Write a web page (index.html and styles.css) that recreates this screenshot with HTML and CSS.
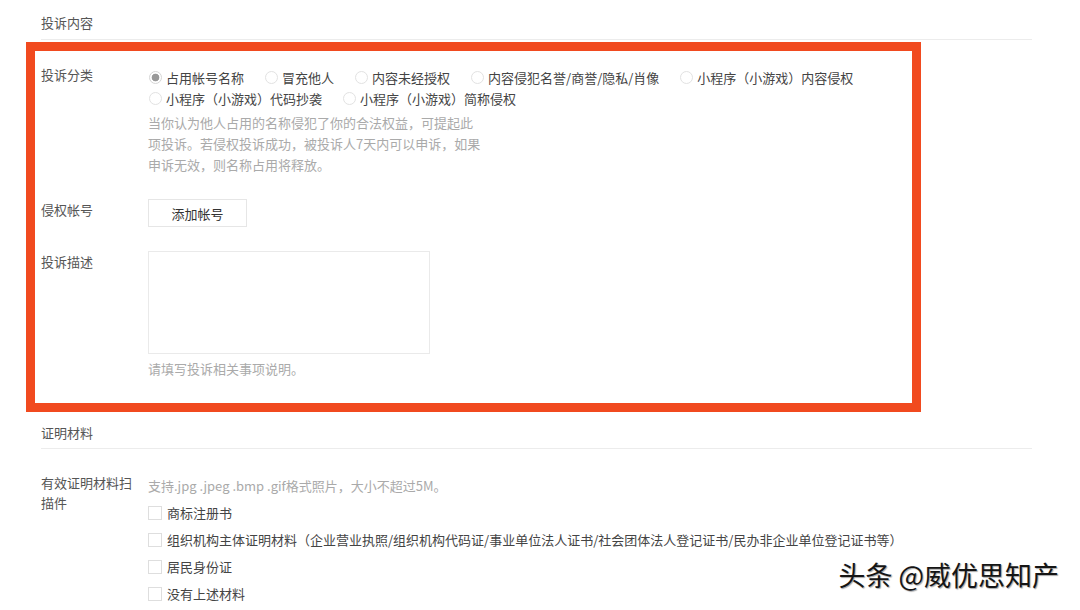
FILE: index.html
```html
<!DOCTYPE html>
<html lang="zh-CN">
<head>
  <meta charset="UTF-8">
  <meta name="viewport" content="width=device-width, initial-scale=1.0">
  <title>投诉内容</title>
  <link rel="stylesheet" href="styles.css">
</head>
<body>
  <div class="page">
    <div class="section-title">投诉内容</div>
    <div class="highlight">
      <div class="form-row">
        <div class="form-label">投诉分类</div>
        <div class="form-field field-offset">
          <div class="radio-group">
            <label class="radio"><input type="radio" name="type" checked><span>占用帐号名称</span></label>
            <label class="radio"><input type="radio" name="type"><span>冒充他人</span></label>
            <label class="radio"><input type="radio" name="type"><span>内容未经授权</span></label>
            <label class="radio"><input type="radio" name="type"><span>内容侵犯名誉/商誉/隐私/肖像</span></label>
            <label class="radio"><input type="radio" name="type"><span>小程序（小游戏）内容侵权</span></label>
            <label class="radio"><input type="radio" name="type"><span>小程序（小游戏）代码抄袭</span></label>
            <label class="radio"><input type="radio" name="type"><span>小程序（小游戏）简称侵权</span></label>
          </div>
          <p class="tips tips-type">当你认为他人占用的名称侵犯了你的合法权益，可提起此<br>项投诉。若侵权投诉成功，被投诉人7天内可以申诉，如果<br>申诉无效，则名称占用将释放。</p>
        </div>
      </div>
      <div class="form-row">
        <div class="form-label">侵权帐号</div>
        <div class="form-field">
          <button class="btn">添加帐号</button>
        </div>
      </div>
      <div class="form-row">
        <div class="form-label">投诉描述</div>
        <div class="form-field">
          <textarea class="textarea"></textarea>
          <p class="tips tips-desc">请填写投诉相关事项说明。</p>
        </div>
      </div>
    </div>

    <div class="section-title section-proof">证明材料</div>
    <div class="form-row row-proof">
      <div class="form-label label-proof">有效证明材料扫描件</div>
      <div class="form-field field-offset">
        <p class="tips tips-proof">支持.jpg .jpeg .bmp .gif格式照片，大小不超过5M。</p>
        <label class="checkbox"><input type="checkbox"><span>商标注册书</span></label>
        <label class="checkbox"><input type="checkbox"><span>组织机构主体证明材料（企业营业执照/组织机构代码证/事业单位法人证书/社会团体法人登记证书/民办非企业单位登记证书等）</span></label>
        <label class="checkbox"><input type="checkbox"><span>居民身份证</span></label>
        <label class="checkbox"><input type="checkbox"><span>没有上述材料</span></label>
      </div>
    </div>
  </div>
  <div class="watermark">头条 @威优思知产</div>
</body>
</html>
```

FILE: styles.css
```css
* {
  margin: 0;
  padding: 0;
  box-sizing: border-box;
}
body {
  font-family: "Noto Sans CJK SC", "Microsoft YaHei", sans-serif;
  font-size: 13px;
  color: #444;
  background: #fff;
  position: relative;
  height: 610px;
  overflow: hidden;
}
.page {
  padding: 0 48px 0 41px;
}
.section-title {
  padding: 12px 0 6px;
  line-height: 21px;
  color: #555;
  border-bottom: 1px solid #ececec;
}
.section-proof {
  padding: 10px 0 5px;
}
.highlight {
  width: 895px;
  margin: 2px 0 0 -15px;
  padding: 13px 6px 24px;
  border: 9px solid #f14a1f;
}
.form-row {
  display: flex;
  margin-top: 24px;
}
.highlight .form-row:first-child {
  margin-top: 0;
}
.form-label {
  width: 95px;
  margin-right: 12px;
  flex-shrink: 0;
  line-height: 21px;
  color: #555;
}
.label-proof {
  line-height: 20px;
}
.form-field {
  flex: 1;
}
.field-offset {
  padding-top: 3px;
}
.radio-group {
  display: flex;
  flex-wrap: wrap;
  column-gap: 20px;
}
.radio,
.checkbox {
  display: flex;
  align-items: center;
  line-height: 21px;
  color: #444;
}
.radio input {
  appearance: none;
  width: 13px;
  height: 13px;
  margin: 0 4px 0 1px;
  border: 1px solid #e2e2e2;
  border-radius: 50%;
  background: #fff;
}
.radio input:checked {
  border-color: #d6d6d6;
  background: radial-gradient(circle, #999 0 3.5px, #fff 4.2px);
}
.tips {
  color: #aaa;
  line-height: 21px;
}
.tips-type {
  margin-top: 3px;
}
.tips-desc {
  margin-top: 4px;
}
.tips-proof {
  line-height: 20px;
  margin-bottom: 3px;
}
.btn {
  width: 99px;
  height: 28px;
  font: inherit;
  color: #333;
  background: #fff;
  border: 1px solid #e6e6e6;
}
.textarea {
  display: block;
  width: 282px;
  height: 103px;
  border: 1px solid #eaeaea;
  resize: none;
}
.row-proof {
  margin-top: 24px;
}
.checkbox {
  line-height: 27px;
}
.checkbox input {
  appearance: none;
  width: 14px;
  height: 14px;
  margin-right: 5px;
  border: 1px solid #dedede;
  background: #fff;
}
.watermark {
  position: absolute;
  right: 21px;
  top: 560px;
  font-size: 27px;
  line-height: 30px;
  color: #151515;
  text-shadow: 1px 1px 1px rgba(0, 0, 0, 0.35);
}
```
